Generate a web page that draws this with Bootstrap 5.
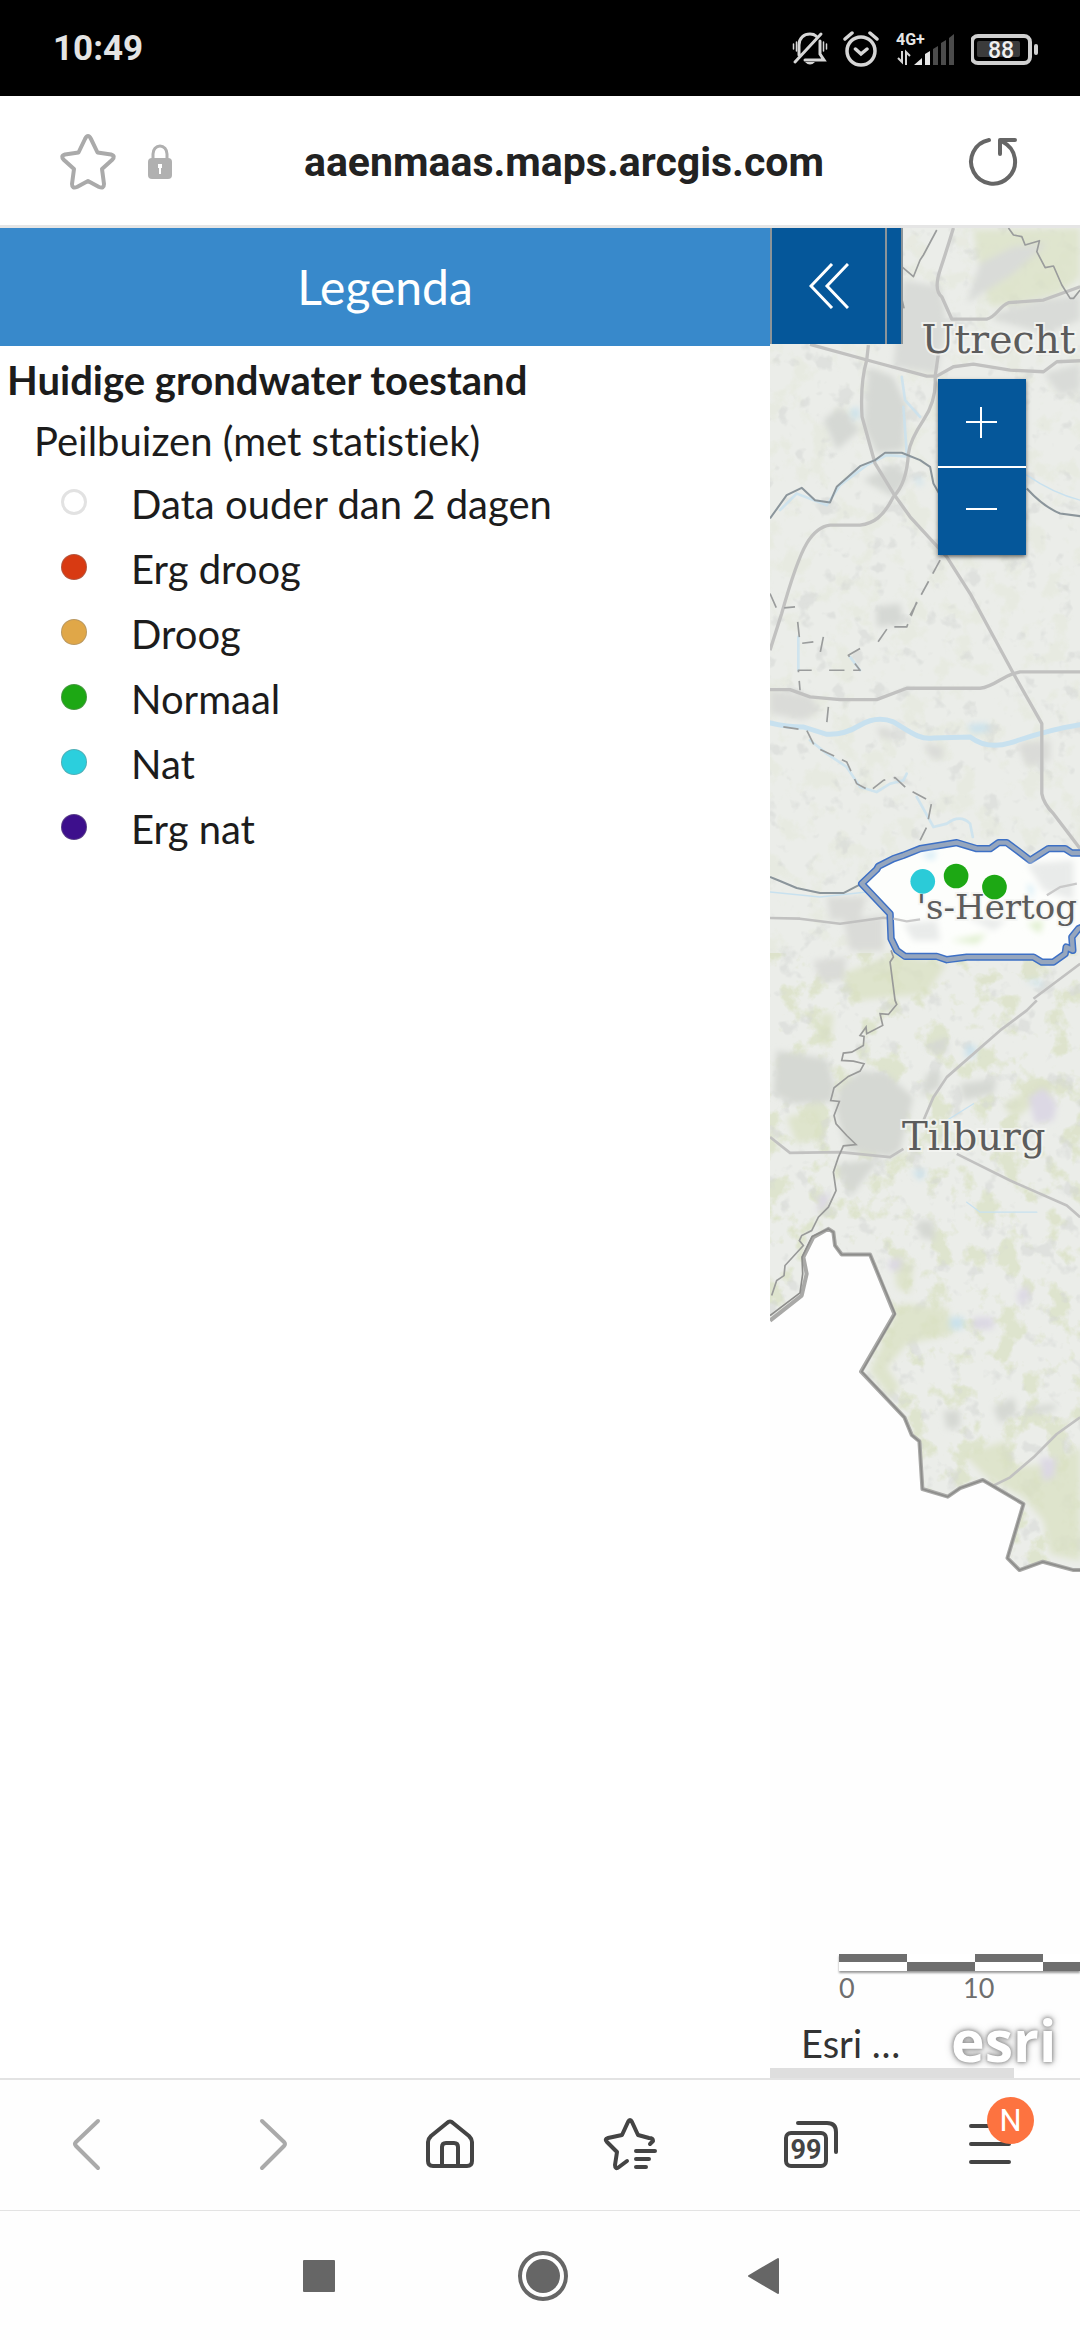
<!DOCTYPE html>
<html lang="nl">
<head>
<meta charset="utf-8">
<meta name="viewport" content="width=device-width, initial-scale=1">
<title>Huidige grondwater toestand</title>
<link href="https://cdn.jsdelivr.net/npm/bootstrap@5.3.0/dist/css/bootstrap.min.css" rel="stylesheet">
<style>
  body { font-family: Lato, "Open Sans", sans-serif; font-variant-ligatures: none; color: #1c1c1c; background: #fefefe; }
  button { border: 0; background: transparent; padding: 0; }
  svg { display: block; }

  .status-bar { height: 96px; padding: 2px 41px 0 53px; background: #000; color: #e4e4e4; font-family: Roboto, sans-serif; }
  .clock { font-size: 35px; font-weight: 700; line-height: 48px; }
  .status-icons { gap: 15px; }

  .address-bar { height: 132px; border-bottom: 3px solid #e5e5e5; padding: 2px 58px 0; background: #fff; }
  .address-input { border: 0; outline: 0; background: transparent; text-align: center; color: #222; padding-right: 14px;
    font: 700 41px/56px Roboto, sans-serif; min-width: 0; }

  .legend-panel { flex: 77 1 0; background: #fff; }
  .legend-title { height: 118px; background: #3889cb; color: #fff; font-size: 48px; line-height: 118px; font-weight: 400; }
  .legend-layer { font-size: 40px; line-height: 62px; font-weight: 700; padding: 3px 7px 0; }
  .legend-group { font-size: 40px; line-height: 60px; padding: 0 34px; }
  .legend-row { font-size: 40px; line-height: 66px; height: 65px; padding-left: 61px; gap: 44px; }
  .legend-dot { width: 26px; height: 26px; margin-top: 18px; border-radius: 50%; border: 1px solid rgba(130,130,130,.4); }
  .dot-old { background: #fff; border: 3px solid #e2e2e2; }
  .dot-very-dry { background: #d83a12; }
  .dot-dry { background: #e0a748; }
  .dot-normal { background: #1da814; }
  .dot-wet { background: #2bcfdd; }
  .dot-very-wet { background: #3d0f8c; }

  .map-pane { flex: 31 1 0; background: #fefefe; }
  .map-label { font-family: "DejaVu Serif", serif; fill: #5c5c5c; stroke: #f4f5f2; stroke-width: 12px; stroke-opacity: .8; paint-order: stroke; }
  .tool-strip { height: 116px; }
  .tool-strip button, .tool-edge { background: #05579a; border-left: 2px solid #8c9499; }
  .tool-strip button { width: 115px; }
  .tool-edge { width: 18px; border-right: 2px solid #8c9499; }
  .zoom-group { top: 151px; right: 54px; width: 88px; box-shadow: 0 2px 4px rgba(0,0,0,.55); }
  .zoom-group button { height: 87px; background: #05579a; }
  .zoom-group button + button { border-top: 2px solid #fff; height: 89px; }

  .scale-wrap { left: 69px; right: 0; bottom: 75px; color: #6e6e6e; font-size: 27px; line-height: 30px; }
  .scale-part { flex: 0 0 68px; height: 17px; border-top: 8px solid #6e6e6e; background: #fff; }
  .scale-part:nth-child(even) { border-top: 0; border-bottom: 9px solid #6e6e6e; }
  .scale-track { box-shadow: 0 2px 2px rgba(0,0,0,.4); margin-bottom: 2px; }
  .scale-zero { width: 124px; }
  .credit-bar { left: 31px; right: 0; bottom: 8px; height: 60px; }
  .credit-text { font-size: 38px; line-height: 66px; width: 144px; color: #333; }
  .esri-logo { font: 700 57px/60px "Open Sans", sans-serif; color: #fff; text-decoration: none; padding-left: 6px;
    text-shadow: 0 0 3px #999, 0 0 5px #999, 0 0 8px #aaa; }
  .map-foot { height: 10px; right: 66px; background: #dedede; }

  .browser-tools { height: 133px; border-top: 2px solid #e3e3e3; border-bottom: 1px solid #e3e3e3; }
  .note-badge { left: calc(50% - 3px); top: 17px; width: 47px; height: 47px; background: #fd7340; color: #fff; font: 400 31px/48px Roboto, sans-serif; }
  .system-nav { height: 129px; }
  .system-nav button { width: 222px; }
</style>
<script src="https://cdn.jsdelivr.net/npm/bootstrap@5.3.0/dist/js/bootstrap.bundle.min.js"></script>
</head>
<body class="d-flex flex-column min-vh-100 overflow-x-hidden">

<header>
  <div class="status-bar d-flex align-items-center justify-content-between">
    <span class="clock">10:49</span>
    <div class="status-icons d-flex align-items-center">
      <svg width="36" height="36" viewBox="0 0 36 36" fill="none" stroke="#d6d6d6" stroke-width="3" stroke-linecap="round" aria-label="Stil">
        <path d="M3 31 29 3M7 24V14C7 7 12 3 18 3Q22 3 24 5M28 10v13l4 6H13"/><path d="M13 31h10q-5 5-10 0z" fill="#d6d6d6" stroke="none"/><path d="M1.500 13v5M4.500 11v9M31.500 11v9M34.500 13v5" stroke-width="1.500"/>
      </svg>
      <svg width="36" height="36" viewBox="0 0 36 36" fill="none" stroke="#d6d6d6" stroke-width="3.500" stroke-linecap="round" aria-label="Wekker">
        <circle cx="18" cy="20" r="14"/><path d="M12.500 18l5.500 5 6-5M2 8l7-6M27 2l7 6"/>
      </svg>
      <svg width="62" height="36" viewBox="0 0 62 36" aria-label="4G+">
        <text x="2" y="14" font-family="Roboto" font-size="16" font-weight="700" fill="#e6e6e6">4G+</text>
        <path d="M4 27l4 4V20M12 34V21l4 4" fill="none" stroke="#d6d6d6" stroke-width="2"/>
        <path d="M20 34l8-7v7zM31 34V23l5-3v14z" fill="#e6e6e6"/><path d="M39 34V18l5-3v19zM47 34V12l5-3v25zM55 34V7l5-4v31z" fill="#4b4b4b"/>
      </svg>
      <svg width="68" height="34" viewBox="3 0 68 34" aria-label="Batterij 88%">
        <rect x="4" y="4" width="58" height="27" rx="6" fill="none" stroke="#d0d0d0" stroke-width="4"/><rect x="9" y="9" width="43" height="16" rx="2" fill="#3b3b3b"/><rect x="66" y="12" width="4" height="11" rx="2" fill="#d0d0d0"/>
        <text x="33" y="26" text-anchor="middle" font-family="Roboto" font-size="23" font-weight="500" fill="#f0f0f0">88</text>
      </svg>
    </div>
  </div>
  <div class="address-bar d-flex align-items-center">
    <button type="button" aria-label="Favoriet"><svg width="60" height="60" viewBox="0 0 60 60" fill="none" stroke="#aaa" stroke-width="4" stroke-linejoin="round">
      <path d="M27 7Q30 1 33 7L39.500 20.500 53 22.500Q58 24 54 28L44 37 46 52Q46 57 41 55L30 49 19 55Q14 57 14 52L16 37 6 28Q2 24 7 22.500L20.500 20.500z"/></svg></button>
    <svg class="ms-4" width="36" height="36" viewBox="0 0 36 36" aria-label="Beveiligd"><path d="M11 16V10a7 8 0 0 1 14 0v6" fill="none" stroke="#b0b0b0" stroke-width="3"/><rect x="6" y="14" width="24" height="21" rx="4" fill="#b0b0b0"/><path d="M16 20h4v4h-1v6h-2v-6h-1z" fill="#fff"/></svg>
    <input class="address-input flex-grow-1" type="text" aria-label="Adres" value="aaenmaas.maps.arcgis.com" readonly>
    <button type="button" aria-label="Vernieuwen"><svg width="60" height="60" viewBox="0 0 60 60" fill="none" stroke="#666" stroke-width="4" stroke-linecap="round" stroke-linejoin="round">
      <path d="M27 8A22 22 0 1 0 41 10M53 8H38V22"/></svg></button>
  </div>
</header>

<main class="d-flex flex-grow-1">
  <section class="legend-panel">
    <h1 class="legend-title text-center m-0">Legenda</h1>
    <h2 class="legend-layer m-0">Huidige grondwater toestand</h2>
    <h3 class="legend-group m-0 fw-normal">Peilbuizen (met statistiek)</h3>
    <ul class="list-unstyled m-0">
      <li class="legend-row d-flex align-items-start"><span class="legend-dot dot-old"></span>Data ouder dan 2 dagen</li>
      <li class="legend-row d-flex align-items-start"><span class="legend-dot dot-very-dry"></span>Erg droog</li>
      <li class="legend-row d-flex align-items-start"><span class="legend-dot dot-dry"></span>Droog</li>
      <li class="legend-row d-flex align-items-start"><span class="legend-dot dot-normal"></span>Normaal</li>
      <li class="legend-row d-flex align-items-start"><span class="legend-dot dot-wet"></span>Nat</li>
      <li class="legend-row d-flex align-items-start"><span class="legend-dot dot-very-wet"></span>Erg nat</li>
    </ul>
  </section>

  <section class="map-pane position-relative overflow-hidden" aria-label="Kaart">
    <svg class="position-absolute top-0 start-0 w-100 h-100" viewBox="30 24 930 5547" preserveAspectRatio="xMinYMin slice">
      <defs>
        <clipPath id="land"><path d="M30 24H960V4048L940 4048 848 4023 778 4048 742 4012 790 3850 668 3778 600 3802 563 3828 487 3805 478 3662 455 3643 433 3590 303 3453 403 3280 330 3102H245L225 3075 220 3035 205 3025 160 3050 130 3110 140 3160 125 3225 30 3300z"/></clipPath>
        <filter id="fields" x="0" y="0" width="100%" height="100%" color-interpolation-filters="sRGB"><feTurbulence type="fractalNoise" baseFrequency=".014" numOctaves="4" seed="8"/><feColorMatrix values="0 0 0 0 .85  0 0 0 0 .88  0 0 0 0 .76  0 6 0 0 -3.100"/></filter>
        <filter id="towns" x="0" y="0" width="100%" height="100%" color-interpolation-filters="sRGB"><feTurbulence type="fractalNoise" baseFrequency=".018" numOctaves="3" seed="31"/><feColorMatrix values="0 0 0 0 .83  0 0 0 0 .84  0 0 0 0 .83  7 0 0 0 -4.200"/></filter>
        <filter id="soft"><feGaussianBlur stdDeviation="9"/></filter>
      </defs>
      <g clip-path="url(#land)">
        <path fill="#ebede9" d="M30 24h930v4100H30z"/>
        <path filter="url(#fields)" opacity=".2" d="M30 24h930v2180H30z"/>
        <path filter="url(#fields)" opacity=".7" d="M30 2200h930v1900H30z"/>
        <path filter="url(#towns)" opacity=".5" d="M30 24h930v4100H30z"/>
        <g filter="url(#soft)">
          <path fill="#dbe2c6" d="M640 30L960 24V170L900 220 780 250 690 260 660 160z" opacity=".75"/>
          <path fill="#d9dbd8" d="M660 130L760 80 860 70 760 160 620 250zM700 280L840 240 960 225V300L860 340 700 300zM430 180L540 200 560 310 530 460 400 440 420 240zM850 460L960 430V510L900 525z"/>
          <path fill="#d5d8d4" d="M325 440L400 470 440 560 430 690 350 700 310 620zM190 600L240 560 300 630 230 690zM310 780L400 730 450 770 400 830zM350 1160L420 1150 430 1210 350 1220z"/>
          <path fill="#dadbd8" d="M30 1410L150 1425 180 1470 130 1500 30 1480zM770 1570L870 1560 870 1620 800 1640zM250 2100L370 2085 370 2190 270 2190zM160 2220L260 2210 250 2280 180 2280zM200 2030L320 2030 300 2095 210 2100zM350 1520L400 1530 410 1560 360 1550zM490 1570L550 1580 545 1620 510 1610z"/>
          <path fill="#d5d8d3" d="M50 2490L200 2515 225 2600 215 2645 100 2650 40 2620zM300 2550L380 2560 460 2630 420 2790 390 2810 260 2790 225 2660 240 2600zM235 2830L360 2815 270 2930zM490 2480L560 2450 560 2500zM500 2560L540 2550 540 2600 480 2630zM600 2590L710 2575 700 2620 610 2640zM470 3000L520 3000 525 3060 480 3050zM700 3560L760 3530 770 3570 720 3610zM550 3570L600 3570 600 3620 560 3625zM810 3560L890 3550 880 3570 820 3580z"/>
          <path fill="#d9e0c2" opacity=".75" d="M250 2260L400 2200 560 2230 500 2320 280 2340zM420 3250L560 3260 580 3340 440 3370 380 3440 420 3500 390 3530 330 3450zM730 2650L850 2580 880 2600 760 2700zM80 2690L170 2670 190 2750 110 2770zM400 3100L460 3130 450 3220 410 3200zM610 3700L740 3660 760 3740 870 3730 960 3680V4020L870 4000 850 3900 790 3830 680 3770zM180 2380L220 2380 210 2470 180 2470z"/>
          <path fill="#dcd8e4" d="M805 2630L850 2600 890 2650 880 2700 825 2710zM180 2920L210 2920 200 2960 170 2980zM840 3710L890 3715 880 3770 850 3780zM385 3120L425 3110 420 3150 390 3150zM770 3220L800 3190 810 3225 780 3260zM640 3290L700 3290 700 3325 640 3325z"/>
          <path fill="#c9e1ec" d="M455 2850L500 2850 480 2880zM620 2470L650 2480 640 2510 615 2510zM270 570L295 560 300 590 280 600zM620 1515L680 1510 690 1530 640 1540zM460 770L490 780 480 800zM790 2280L840 2280 850 2300zM570 3290L610 3290 610 3325 570 3325z"/>
        </g>
        <g fill="none" stroke="#c8e1ef" stroke-linecap="round">
          <path stroke-width="15" d="M30 1508Q80 1520 130 1520L200 1542Q250 1545 300 1515T400 1505C450 1535 480 1560 520 1553T630 1550C670 1580 710 1580 750 1568S850 1530 960 1513"/>
          <path stroke-width="8" opacity=".8" d="M150 1560L200 1600 260 1640 300 1700 350 1715 390 1690 430 1680 440 1660M470 1730L520 1820 560 1810Q600 1780 630 1810L638 1850M425 470L435 540 480 590M440 700L430 560M60 870L110 820 200 855 240 795 320 735 380 705 450 710M115 1250V1350M270 1310L300 1350"/>
          <path stroke-width="4" d="M800 765Q880 820 960 840M30 2015L180 2030 320 2015M620 2945L660 2975H830M560 2700L640 2650"/>
        </g>
        <g fill="none" stroke="#c1c1c0" stroke-width="10" stroke-linejoin="round">
          <path d="M580 24Q560 90 540 150T545 230L575 297H680C710 290 715 260 745 248L850 240 960 200"/>
          <path d="M150 373L340 425 500 468H530L580 440 640 432 750 450 850 455 890 425 960 422"/>
          <path d="M325 375L320 420Q300 490 306 590L345 730 400 820 450 890 560 1010 630 1120 760 1360 845 1510V1720Q850 1750 880 1780L960 1885"/>
          <path d="M535 400L525 470Q530 540 490 600T445 700Q440 790 400 830C370 890 340 910 300 915H210Q170 920 140 970T65 1180L30 1290"/>
          <path d="M30 1408L90 1408 150 1430 240 1438H350L440 1404H660C700 1400 725 1370 760 1360L780 1355H960"/>
          <path stroke-width="8" d="M30 2093L120 2095 240 2110 370 2092 430 2100 480 2097M30 2750L90 2797 240 2795 390 2810 430 2785M490 2700L520 2630 560 2570 720 2430 800 2370 830 2340M820 2335L960 2230M590 2800L750 2880 920 2955 960 2990M700 3795L750 3770 820 3710 890 3640 960 3590M860 2025L960 1985"/>
        </g>
        <g fill="none" stroke="#9a9c9c" stroke-width="5" stroke-linejoin="round">
          <path d="M425 140L460 170 480 120 490 105 530 30M745 24L760 45 785 50 795 75 838 62 830 95 855 143 880 138 905 195 930 235H940L960 210M425 235L432 265"/>
          <path stroke="#8b959b" stroke-width="6" d="M30 895L80 825 125 803 165 840 210 847 230 800 300 738 345 720 375 698H425L480 720 510 740 520 790 540 825M800 805Q850 860 900 880L960 888M30 1970L60 1982 110 2003 180 2018H250L305 1990"/>
          <path stroke-dasharray="46 26" d="M540 1020L450 1185M470 1145L440 1220H385L340 1285M30 1120L50 1165 105 1160M113 1205L120 1270 160 1265M190 1250L180 1300M300 1285L265 1305 300 1350 190 1350M155 1350L115 1350 120 1410M205 1460L200 1510M70 1520L140 1530 165 1580 260 1625 290 1690 330 1712 370 1680 405 1672 440 1705 515 1745 500 1820 480 1860"/>
        </g>
        <path fill="none" stroke="#999a99" stroke-width="5" d="M393 2190L400 2210 390 2225 405 2340 410 2352 385 2382 360 2380 368 2415 320 2440 318 2420 300 2445 312 2448 310 2475 275 2495 250 2498 245 2520 280 2522 312 2530 300 2552 265 2568 222 2602 212 2640 238 2643 222 2685 228 2710 260 2745 288 2772 250 2776 235 2810 220 2855 228 2910 205 2960 175 2990 155 3030 125 3045 118 3060 130 3075 75 3135 72 3165 50 3180 35 3225"/>
      </g>
      <path fill="none" stroke="#a9a9a7" stroke-width="12" stroke-linejoin="round" d="M30 3300L125 3225 140 3160 130 3110 160 3050 205 3025 220 3035 225 3075 245 3102H330L403 3280 303 3453 433 3590 455 3643 478 3662 487 3805 563 3828 600 3802 668 3778 790 3850 742 4012 778 4048 848 4023 940 4048H970"/>
      <path fill="none" stroke="#8d8d8b" stroke-width="5" stroke-linejoin="round" d="M30 3285L120 3217 128 3160 126 3110 156 3048 205 3025 220 3035 225 3075 245 3102H330L405 3280 305 3453 433 3590 455 3643 478 3662 487 3805 563 3828 600 3802 668 3778 790 3850 742 4012 778 4048 848 4023 940 4048H970"/>
      <g stroke-linejoin="round">
        <path fill="#fdfefc" stroke="#3d70c5" stroke-width="22" d="M305 1990L350 1947 355 1938 400 1915 430 1905 480 1885 590 1867 650 1885H690L715 1867H740L775 1893 810 1920 865 1885H915L935 1898H990V2110L955 2125 935 2150 938 2190 918 2180 915 2200 880 2225H845L820 2210H620L560 2218 530 2208H435L410 2190 393 2155 390 2080z"/>
        <g filter="url(#soft)"><path fill="#e9ebea" d="M800 1930L940 1920V2040L850 2010zM430 2110L530 2100 540 2160 460 2160zM620 2090L740 2100 700 2130z"/><path fill="#e0efcf" d="M800 2110L850 2100 840 2140zM570 2160L680 2140 650 2170z"/><path fill="#d3ebf6" d="M800 1990L820 2000 815 2040zM480 1905L530 1890 520 1920z"/></g>
        <path fill="none" stroke="#96a6bd" stroke-width="13" d="M305 1990L350 1947 355 1938 400 1915 430 1905 480 1885 590 1867 650 1885H690L715 1867H740L775 1893 810 1920 865 1885H915L935 1898H990V2110L955 2125 935 2150 938 2190 918 2180 915 2200 880 2225H845L820 2210H620L560 2218 530 2208H435L410 2190 393 2155 390 2080z"/>
      </g>
      <path fill="none" stroke="#c9c9c9" stroke-width="7" d="M400 2095L440 2103 480 2097M860 2025L900 2000 950 1990"/>
      <text class="map-label" x="484" y="400" font-size="118">Utrecht</text>
      <text class="map-label" x="470" y="2095" font-size="102">'s-Hertog</text>
      <text class="map-label" x="426" y="2790" font-size="116">Tilburg</text>
      <circle cx="488" cy="1983" r="37" fill="#2bcbd8"/><circle cx="588" cy="1967" r="37" fill="#1da814"/><circle cx="703" cy="2000" r="37" fill="#1da814"/>
    </svg>

    <div class="tool-strip position-absolute top-0 start-0 d-flex">
      <button type="button" class="d-flex align-items-center justify-content-center" aria-label="Paneel inklappen"><svg width="40" height="46" viewBox="0 0 40 46" fill="none" stroke="#fff" stroke-width="3"><path d="M23 1L2 23 23 45M39 1L18 23 39 45"/></svg></button>
      <span class="tool-edge"></span>
    </div>
    <div class="zoom-group position-absolute d-flex flex-column">
      <button type="button" class="d-flex align-items-center justify-content-center" aria-label="Inzoomen"><svg width="32" height="32" viewBox="0 0 32 32" stroke="#fff" stroke-width="2"><path d="M0 15H31M15 0V31"/></svg></button>
      <button type="button" class="d-flex align-items-center justify-content-center" aria-label="Uitzoomen"><svg width="32" height="32" viewBox="0 0 32 32" stroke="#fff" stroke-width="2"><path d="M0 13H31"/></svg></button>
    </div>

    <div class="scale-wrap position-absolute">
      <div class="scale-track d-flex overflow-hidden"><i class="scale-part"></i><i class="scale-part"></i><i class="scale-part"></i><i class="scale-part"></i></div>
      <div class="d-flex"><span class="scale-zero">0</span><span>10</span></div>
    </div>
    <div class="credit-bar position-absolute d-flex">
      <span class="credit-text">Esri …</span>
      <a class="esri-logo" href="#">esri</a>
    </div>
    <div class="map-foot position-absolute bottom-0 start-0"></div>
  </section>
</main>

<footer>
  <nav class="browser-tools row g-0 row-cols-6" aria-label="Browser">
    <button type="button" class="col d-flex align-items-center justify-content-center" aria-label="Terug"><svg width="60" height="60" viewBox="0 0 60 60" fill="none" stroke="#aaa" stroke-width="4" stroke-linecap="round" stroke-linejoin="round"><path d="M38 6L16 27Q14 29 16 31L38 53"/></svg></button>
    <button type="button" class="col d-flex align-items-center justify-content-center" aria-label="Vooruit"><svg width="60" height="60" viewBox="0 0 60 60" fill="none" stroke="#aaa" stroke-width="4" stroke-linecap="round" stroke-linejoin="round"><path d="M22 6L44 27Q46 29 44 31L22 53"/></svg></button>
    <button type="button" class="col d-flex align-items-center justify-content-center" aria-label="Startpagina"><svg width="60" height="60" viewBox="0 0 60 60" fill="none" stroke="#444" stroke-width="4" stroke-linejoin="round"><path d="M27 8Q30 5 33 8L49 21Q52 24 52 27V46Q52 51 47 51H13Q8 51 8 46V27Q8 24 11 21zM22 51V32Q22 28 26 28H34Q38 28 38 32V51"/></svg></button>
    <button type="button" class="col d-flex align-items-center justify-content-center" aria-label="Favorieten"><svg width="60" height="60" viewBox="0 0 60 60" fill="none" stroke="#444" stroke-width="4" stroke-linecap="round" stroke-linejoin="round"><path d="M50 29L53 26Q53 23 49 23L38 20 32 7Q30 3 28 7L22 20 8 23Q4 24 7 27L17 37 15 50Q15 55 19 52L27 46M36 36H55M36 44H49M36 52H46"/></svg></button>
    <button type="button" class="col d-flex align-items-center justify-content-center" aria-label="Tabbladen"><svg width="60" height="60" viewBox="0 0 60 60" fill="none" stroke="#444" stroke-width="4" stroke-linecap="round"><rect x="6" y="18" width="40" height="33" rx="5"/><path d="M18 8H47Q56 8 56 17V37"/><text x="26" y="44" text-anchor="middle" font-family="Roboto" font-size="27" font-weight="700" fill="#444" stroke="none">99</text></svg></button>
    <button type="button" class="col d-flex align-items-center justify-content-center position-relative" aria-label="Menu"><svg width="60" height="60" viewBox="0 0 60 60" fill="none" stroke="#444" stroke-width="4" stroke-linecap="round"><path d="M11 11H49M11 29H49M11 47H49"/></svg><span class="note-badge position-absolute rounded-circle text-center">N</span></button>
  </nav>
  <nav class="system-nav d-flex justify-content-center align-items-center" aria-label="Systeem">
    <button type="button" class="d-flex justify-content-center" aria-label="Recente apps"><svg width="60" height="60" viewBox="0 0 60 60"><rect x="15" y="14" width="32" height="32" rx="1" fill="#666"/></svg></button>
    <button type="button" class="d-flex justify-content-center" aria-label="Start"><svg width="60" height="60" viewBox="0 0 60 60"><circle cx="33" cy="30" r="23" fill="none" stroke="#666" stroke-width="4"/><circle cx="33" cy="30" r="17" fill="#666"/></svg></button>
    <button type="button" class="d-flex justify-content-center" aria-label="Vorige"><svg width="60" height="60" viewBox="0 0 60 60"><path d="M17 30L46 13V47z" fill="#666" stroke="#666" stroke-width="2" stroke-linejoin="round"/></svg></button>
  </nav>
</footer>
</body>
</html>
